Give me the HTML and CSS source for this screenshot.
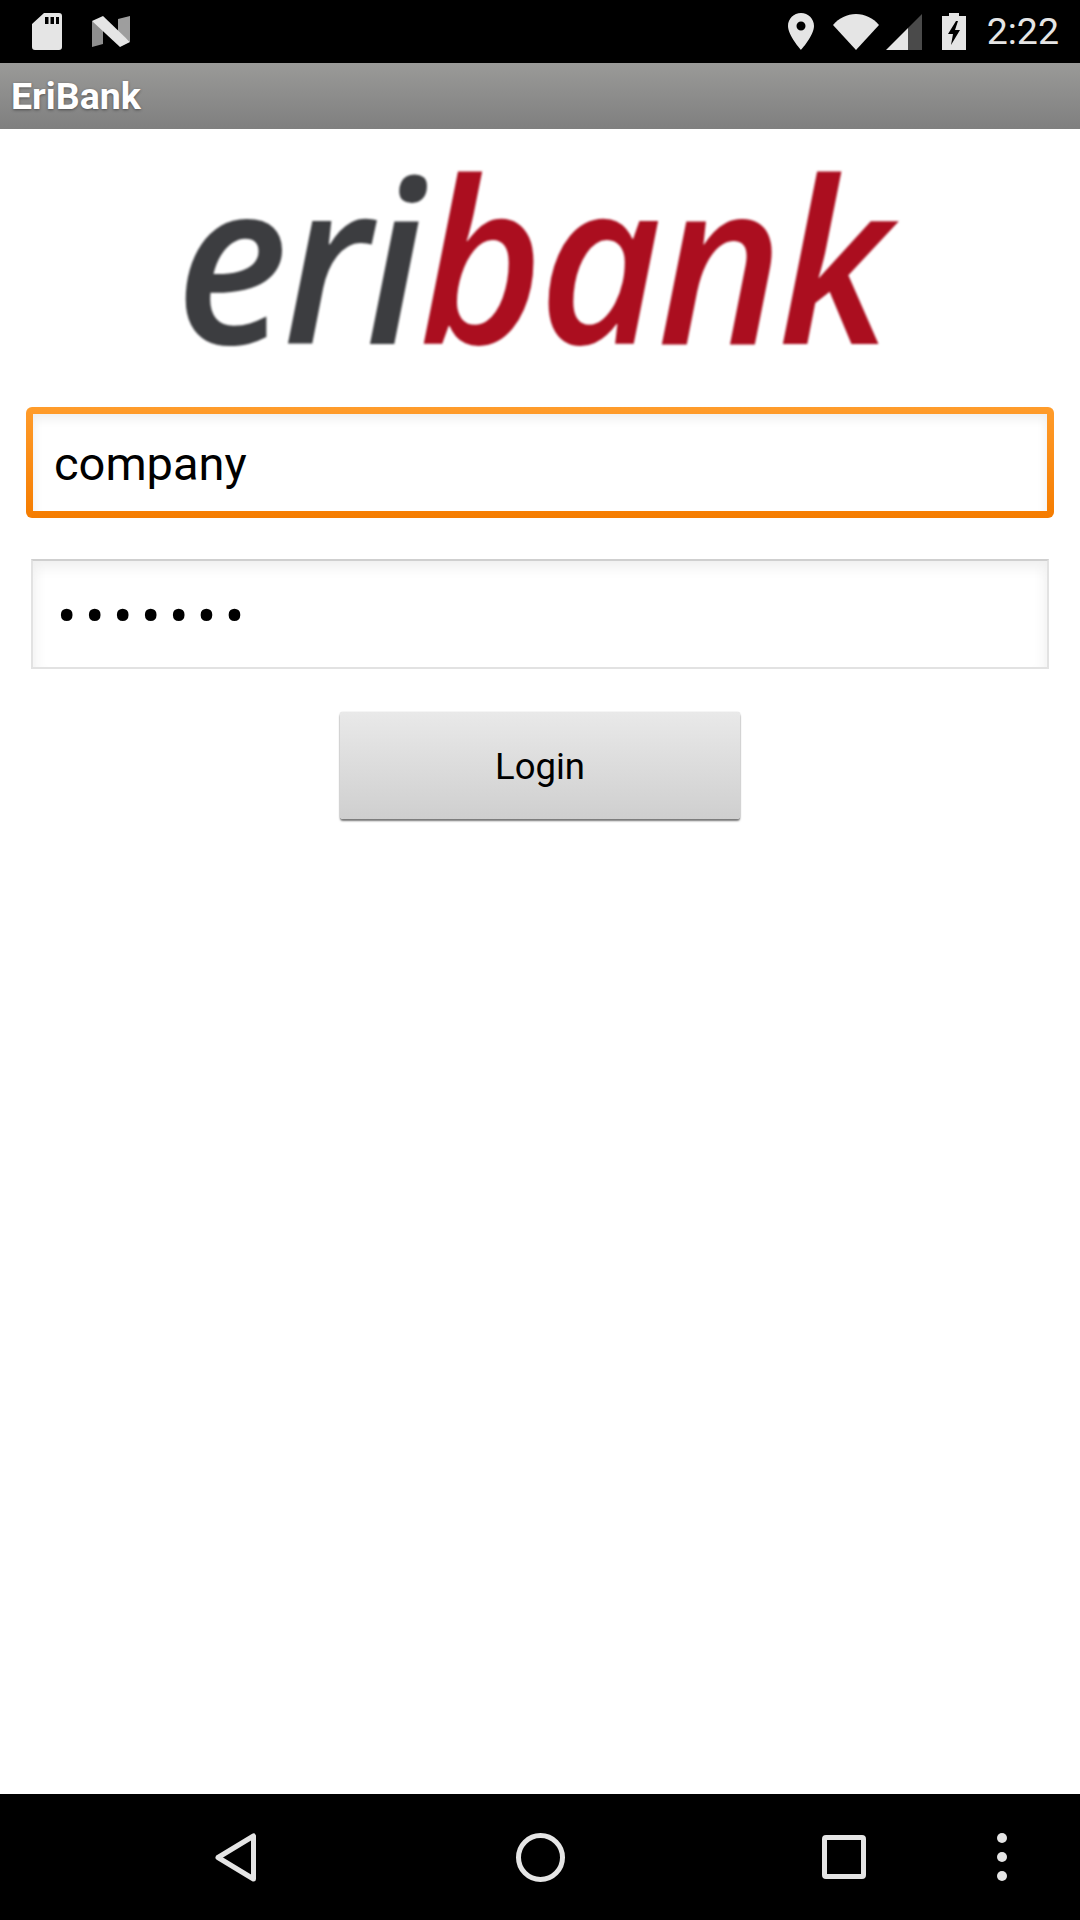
FILE: index.html
```html
<!DOCTYPE html>
<html lang="en">
<head>
<meta charset="utf-8">
<title>EriBank</title>
<link rel="stylesheet" href="styles.css">
</head>
<body>
<div class="screen">
  <header class="status-bar">
    <div class="status-left">
      <svg class="ic-sd" viewBox="0 0 30 37"><path fill="#e5e5e5" fill-rule="evenodd" d="M12 0H27a3 3 0 0 1 3 3V34a3 3 0 0 1-3 3H3a3 3 0 0 1-3-3V11ZM13 4V11H16.500V4ZM18.500 4V11H22V4ZM24 4V11H27V4Z"/></svg>
      <svg class="ic-n" viewBox="0 0 38 31"><path fill="#8e8e8e" d="M0 5 11 10V28L0 31Z"/><path fill="#9e9e9e" d="M38 0V26L26 16V3Z"/><path fill="#e5e5e5" d="M0 5 11 0 38 26 28 31Z"/></svg>
    </div>
    <div class="status-right">
      <svg class="ic-pin" viewBox="0 0 26 37"><path fill="#e5e5e5" fill-rule="evenodd" d="M13 0C5.800 0 0 5.800 0 13 0 22.500 13 37 13 37S26 22.500 26 13C26 5.800 20.200 0 13 0ZM13 8.500A4.500 4.500 0 1 1 13 17.500 4.500 4.500 0 0 1 13 8.500Z"/></svg>
      <svg class="ic-wifi" viewBox="0 0 46 36"><path fill="#e5e5e5" d="M0 11C6 4 14 0 23 0S40 4 46 11L23 36Z"/></svg>
      <svg class="ic-signal" viewBox="0 0 36 36"><path fill="#e5e5e5" d="M0 36 22 14V36Z"/><path fill="#4a4a4a" d="M22 14 36 0V36H22Z"/></svg>
      <svg class="ic-batt" viewBox="0 0 24 37"><path fill="#e5e5e5" fill-rule="evenodd" d="M7 0H17V3H24V37H0V3H7ZM14 8 6 21H11L9 32 18 17H13L16 8Z"/></svg>
      <span class="clock">2:22</span>
    </div>
  </header>

  <div class="title-bar">EriBank</div>

  <main class="content">
    <div class="logo"><span class="logo-dark">eri</span><span class="logo-red">bank</span></div>
    <div class="field field-focus">company</div>
    <div class="field field-idle">•••••••</div>
    <div class="login-btn">Login</div>
  </main>

  <nav class="nav-bar">
    <svg class="ic-back" viewBox="0 0 42 49"><path fill="none" stroke="#e5e5e5" stroke-width="5" stroke-linejoin="round" d="M38.500 3V46L3 24.500Z"/></svg>
    <svg class="ic-home" viewBox="0 0 49 49"><circle cx="24.500" cy="24.500" r="22" fill="none" stroke="#e5e5e5" stroke-width="5"/></svg>
    <svg class="ic-recent" viewBox="0 0 44 44"><rect x="2.500" y="2.500" width="39" height="39" rx="1.500" fill="none" stroke="#e5e5e5" stroke-width="5"/></svg>
    <svg class="ic-more" viewBox="0 0 10 48"><circle cx="5" cy="5" r="5" fill="#e5e5e5"/><circle cx="5" cy="24" r="5" fill="#e5e5e5"/><circle cx="5" cy="43" r="5" fill="#e5e5e5"/></svg>
  </nav>
</div>
</body>
</html>
```
FILE: styles.css
```css
* { box-sizing: border-box; }
html, body { margin: 0; padding: 0; background: #000; }
.screen {
  width: 1080px;
  height: 1920px;
  display: flex;
  flex-direction: column;
  font-family: Roboto, "Liberation Sans", sans-serif;
  overflow: hidden;
}

/* Status bar */
.status-bar {
  height: 63px;
  background: #000;
  display: flex;
  justify-content: space-between;
  align-items: center;
}
.status-left { display: flex; align-items: center; gap: 30px; padding-left: 32px; }
.status-right { display: flex; align-items: center; padding-right: 21px; }
.ic-sd { width: 30px; height: 37px; }
.ic-n { width: 38px; height: 31px; }
.ic-pin { width: 26px; height: 37px; }
.ic-wifi { width: 46px; height: 36px; margin-left: 19px; }
.ic-signal { width: 36px; height: 36px; margin-left: 7px; }
.ic-batt { width: 24px; height: 37px; margin-left: 20px; }
.clock { color: #e5e5e5; font-size: 37.500px; line-height: 1; margin-left: 21px; }

/* Title bar */
.title-bar {
  height: 66px;
  padding-left: 11px;
  display: flex;
  align-items: center;
  background: linear-gradient(#9a9a98, #7f7f7f);
  color: #fff;
  font-size: 37.500px;
  font-weight: 700;
  text-shadow: 0 1px 3px rgba(0, 0, 0, .45);
}

/* Content */
.content {
  flex: 1;
  background: #fff;
  display: flex;
  flex-direction: column;
  align-items: center;
}
.logo {
  height: 278px;
  font-family: "Open Sans", "Noto Sans", sans-serif;
  font-style: italic;
  font-weight: 600;
  font-size: 226px;
  line-height: 254px;
  letter-spacing: -5px;
  transform: translateX(-9px) scaleX(.94);
  filter: blur(1px);
  white-space: nowrap;
}
.logo-dark { color: #3c3d40; }
.logo-red { color: #ab0e1f; }
.field {
  display: flex;
  align-items: center;
  color: #000;
}
.field-focus {
  width: 1028px;
  height: 111px;
  padding: 1px 0 0 21px;
  font-size: 47px;
  border: 7px solid transparent;
  border-radius: 6px;
  background: linear-gradient(#fff, #fff) padding-box, linear-gradient(#ff9c2b, #f57c00) border-box;
  box-shadow: inset 0 12px 12px -8px #ececec, inset 10px 0 10px -8px #f2f2f2, inset -10px 0 10px -8px #f2f2f2;
}
.field-idle {
  width: 1018px;
  height: 110px;
  margin-top: 41px;
  padding: 3px 0 0 24px;
  font-size: 58px;
  letter-spacing: 8.400px;
  border: 2px solid #e2e2e2;
  border-top-color: #cfcfcf;
  box-shadow: inset 0 14px 14px -8px #eee, inset 12px 0 12px -8px #f4f4f4, inset -12px 0 12px -8px #f4f4f4;
}
.login-btn {
  width: 400px;
  height: 107px;
  margin: 43px 0 0;
  padding-top: 2px;
  display: flex;
  align-items: center;
  justify-content: center;
  font-size: 36.500px;
  color: #000;
  background: linear-gradient(#e9e9e9, #cfcfcf);
  border-radius: 3px;
  box-shadow: 0 2px 2px #777, 0 0 1px #999;
}

/* Navigation bar */
.nav-bar {
  height: 126px;
  background: #000;
  display: flex;
  align-items: center;
  padding-left: 215px;
}
.ic-back { width: 42px; height: 49px; }
.ic-home { width: 49px; height: 49px; margin-left: 259px; }
.ic-recent { width: 44px; height: 44px; margin-left: 257px; }
.ic-more { width: 10px; height: 48px; margin-left: 131px; }
```
